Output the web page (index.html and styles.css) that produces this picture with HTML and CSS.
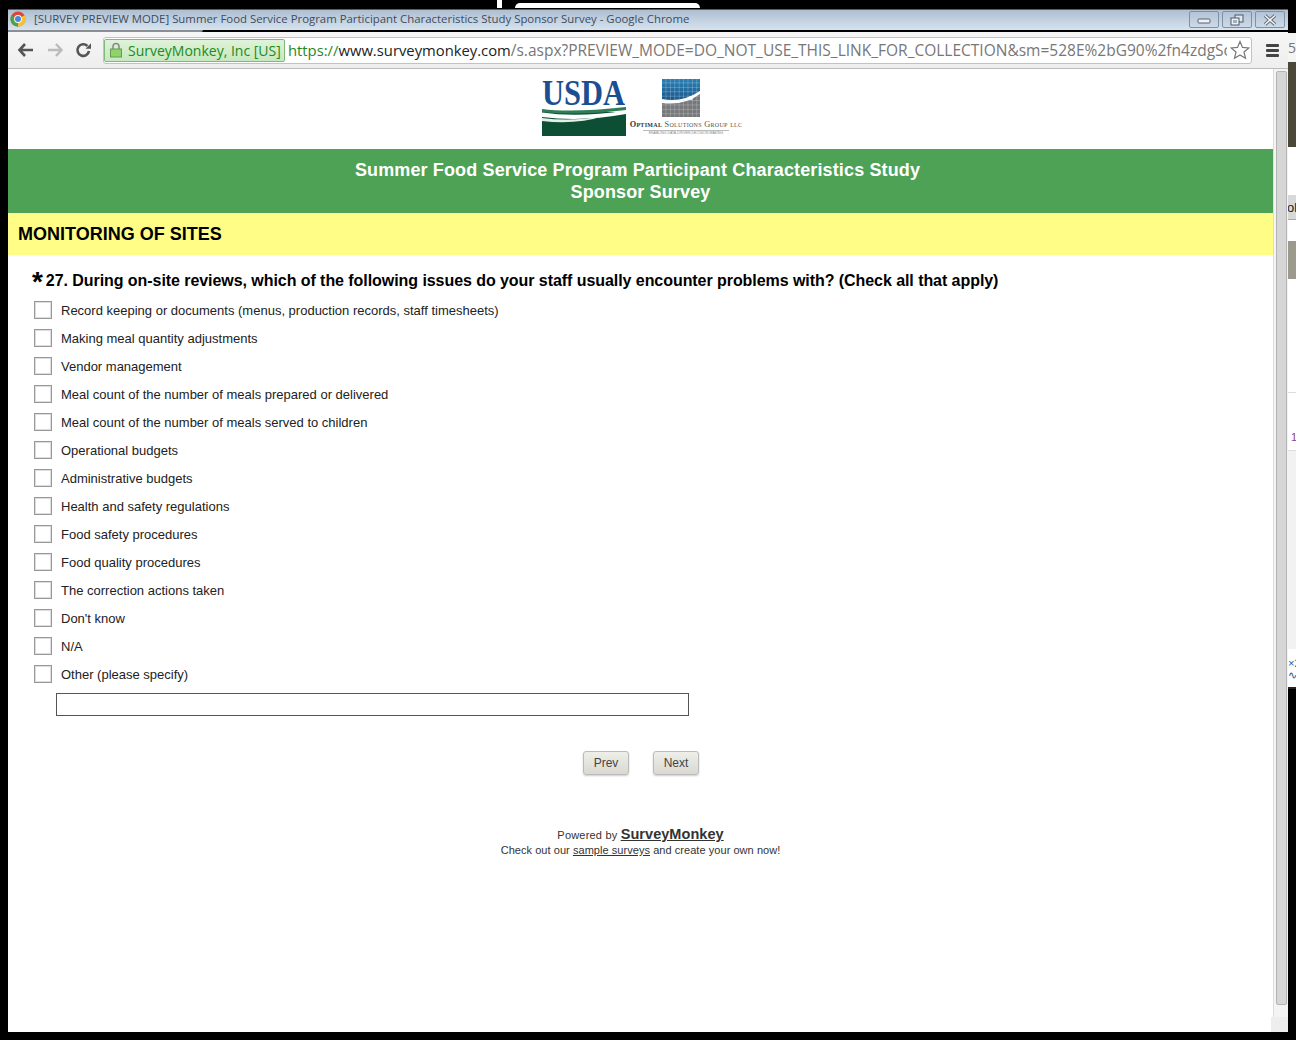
FILE: index.html
```html
<!DOCTYPE html>
<html lang="en">
<head>
<meta charset="utf-8">
<title>Survey preview</title>
<link rel="stylesheet" href="styles.css">
</head>
<body>
<div class="desk">
  <div class="topstrip"><span class="frag-a"></span><span class="frag-b"></span></div>
  <div class="middle">
    <div class="window">
      <header class="titlebar">
        <svg class="chrome-logo" width="16" height="16" viewBox="0 0 16 16">
          <circle cx="8" cy="8" r="7.5" fill="#d9473b"/>
          <path d="M8 8 L14.5 4.2 A7.5 7.5 0 0 1 8 15.5 Z" fill="#f4c430"/>
          <path d="M8 8 L8 15.5 A7.5 7.5 0 0 1 1.5 4.2 Z" fill="#4aa346"/>
          <circle cx="8" cy="8" r="3.9" fill="#fff"/>
          <circle cx="8" cy="8" r="3" fill="#4a86d8"/>
        </svg>
        <span class="wintitle">[SURVEY PREVIEW MODE] Summer Food Service Program Participant Characteristics Study Sponsor Survey - Google Chrome</span>
        <div class="winbtns">
          <span class="winbtn"><svg width="14" height="10" viewBox="0 0 14 10"><rect x="1" y="4" width="12" height="4" rx="1" fill="#eef2f6" stroke="#54606e"/></svg></span>
          <span class="winbtn"><svg width="14" height="12" viewBox="0 0 14 12"><rect x="5" y="1" width="8" height="7" fill="#dfe6ee" stroke="#4c5866"/><rect x="1" y="4" width="8" height="7" fill="#eef2f6" stroke="#4c5866"/><rect x="3" y="6" width="4" height="3" fill="#9fb0c2"/></svg></span>
          <span class="winbtn"><svg width="16" height="12" viewBox="0 0 16 12"><path d="M3 1.5 L13 10.5 M13 1.5 L3 10.5" stroke="#5a6470" stroke-width="3.4"/><path d="M3 1.5 L13 10.5 M13 1.5 L3 10.5" stroke="#f2f4f6" stroke-width="1.6"/></svg></span>
        </div>
      </header>
      <div class="tabline"><span class="tabedge"></span></div>
      <nav class="toolbar">
        <svg class="navicon" width="18" height="16" viewBox="0 0 18 16"><path d="M8 2 L2.5 8 L8 14 M3 8 H16" fill="none" stroke="#555" stroke-width="2.6"/></svg>
        <svg class="navicon" width="18" height="16" viewBox="0 0 18 16"><path d="M10 2 L15.5 8 L10 14 M15 8 H2" fill="none" stroke="#bbb" stroke-width="2.4"/></svg>
        <svg class="navicon" width="18" height="16" viewBox="0 0 18 16"><path d="M14 9 A5.8 5.8 0 1 1 12.4 4" fill="none" stroke="#555" stroke-width="2.6"/><path d="M10.5 6.8 H16 V1.2 Z" fill="#555"/></svg>
        <div class="omnibox">
          <div class="ev">
            <svg width="14" height="16" viewBox="0 0 14 16"><path d="M4 7 V4.5 A3 3 0 0 1 10 4.5 V7" fill="none" stroke="#8a8a8a" stroke-width="1.6"/><rect x="1.5" y="7" width="11" height="8" fill="#8fd468" stroke="#6a9a50"/></svg>
            <span>SurveyMonkey, Inc [US]</span>
          </div>
          <div class="url"><span class="scheme">https://</span><span class="host">www.surveymonkey.com</span><span class="path">/s.aspx?PREVIEW_MODE=DO_NOT_USE_THIS_LINK_FOR_COLLECTION&amp;sm=528E%2bG90%2fn4zdgSc</span></div>
          <svg class="star" width="20" height="20" viewBox="0 0 20 20"><path d="M10 1.5 L12.5 7.4 L18.8 7.9 L14 12 L15.5 18.3 L10 15 L4.5 18.3 L6 12 L1.2 7.9 L7.5 7.4 Z" fill="#fff" stroke="#777" stroke-width="1.2"/></svg>
        </div>
        <div class="burger"><span></span><span></span><span></span></div>
      </nav>
      <div class="viewport">
        <main class="page">
          <div class="logos">
            <svg class="usda" width="84" height="57" viewBox="0 0 84 57">
              <text x="0" y="26" class="usda-text" textLength="83" lengthAdjust="spacingAndGlyphs">USDA</text>
              <rect x="0" y="33" width="84" height="24" fill="#0d4f35"/>
              <path d="M0 30 Q30 34 84 28 L84 31 Q36 37 0 33 Z" fill="#2f7d56"/>
              <path d="M0 33.5 Q36 39 84 31.5 L84 35 Q40 43 0 38 Z" fill="#fff"/>
              <path d="M0 39 Q30 43 62 37 Q34 46 0 42 Z" fill="#e4efe8"/>
            </svg>
            <div class="osg">
              <svg class="osg-mark" width="38" height="38" viewBox="0 0 38 38">
                <defs>
                  <pattern id="grid" width="4.4" height="4.4" patternUnits="userSpaceOnUse"><path d="M4.4 0 V4.4 H0" fill="none" stroke="#dfe8ef" stroke-width=".5"/></pattern>
                </defs>
                <linearGradient id="sky" x1="0" y1="0" x2="0" y2="1"><stop offset="0" stop-color="#2a7fb5"/><stop offset="1" stop-color="#164f80"/></linearGradient>
                <rect width="38" height="26" fill="url(#sky)"/>
                <path d="M0 20 Q20 24 38 12 V38 H0 Z" fill="#fff"/>
                <path d="M0 24 Q22 27 38 15 V38 H0 Z" fill="#77787a"/>
                <rect width="38" height="38" fill="url(#grid)"/>
                <circle cx="29" cy="19" r="2" fill="#fff"/>
              </svg>
              <div class="osg-name"><b>Optimal</b> Solutions Group llc</div>
              <div class="osg-tag">ENABLING DATA-DRIVEN DECISION MAKING</div>
            </div>
          </div>
          <div class="banner">
            <div class="banner-main">Summer Food Service Program Participant Characteristics Study</div>
            <div>Sponsor Survey</div>
          </div>
          <h2 class="section">MONITORING OF SITES</h2>
          <form class="question">
            <h3 class="qtitle"><span class="req">*</span>27. During on-site reviews, which of the following issues do your staff usually encounter problems with? (Check all that apply)</h3>
            <label class="opt"><span class="box"></span>Record keeping or documents (menus, production records, staff timesheets)</label>
            <label class="opt"><span class="box"></span>Making meal quantity adjustments</label>
            <label class="opt"><span class="box"></span>Vendor management</label>
            <label class="opt"><span class="box"></span>Meal count of the number of meals prepared or delivered</label>
            <label class="opt"><span class="box"></span>Meal count of the number of meals served to children</label>
            <label class="opt"><span class="box"></span>Operational budgets</label>
            <label class="opt"><span class="box"></span>Administrative budgets</label>
            <label class="opt"><span class="box"></span>Health and safety regulations</label>
            <label class="opt"><span class="box"></span>Food safety procedures</label>
            <label class="opt"><span class="box"></span>Food quality procedures</label>
            <label class="opt"><span class="box"></span>The correction actions taken</label>
            <label class="opt"><span class="box"></span>Don't know</label>
            <label class="opt"><span class="box"></span>N/A</label>
            <label class="opt"><span class="box"></span>Other (please specify)</label>
            <div class="other"></div>
          </form>
          <div class="buttons">
            <span class="btn">Prev</span>
            <span class="btn">Next</span>
          </div>
          <footer class="foot">
            <div class="foot-1">Powered by <a class="brand">SurveyMonkey</a></div>
            <div class="foot-2">Check out our <a class="plain">sample surveys</a> and create your own now!</div>
          </footer>
        </main>
        <aside class="scroll"><div class="thumb"></div><div class="corner"></div></aside>
      </div>
    </div>
    <div class="behind">
      <div class="b-gap"></div>
      <div class="b-five">5</div>
      <div class="b-olive"></div>
      <div class="b-white1"></div>
      <div class="b-grey">oll</div>
      <div class="b-white2"></div>
      <div class="b-stone"></div>
      <div class="b-white3"></div>
      <div class="b-rows"><span>1</span></div>
      <div class="b-pale"></div>
      <div class="b-glyphs">×2<br>∿</div>
      <div class="b-dark"></div>
    </div>
  </div>
</div>
</body>
</html>
```
FILE: styles.css
```css
* { box-sizing: border-box; }
html, body { margin: 0; height: 100%; background: #000; overflow: hidden; }
.desk { width: 1296px; height: 1040px; background: #000; display: flex; flex-direction: column; }
.topstrip { height: 9px; display: flex; flex: none; }
.frag-a { width: 5px; height: 8px; margin-left: 497px; background: #fff; }
.frag-b { width: 185px; height: 5px; margin: 3px 0 0 13px; background: #fff; border-radius: 5px 5px 0 0; }
.middle { display: flex; height: 1023px; flex: none; }
.window { width: 1280px; margin-left: 8px; display: flex; flex-direction: column; }
.titlebar { height: 21px; flex: none; background: linear-gradient(#aebfd2, #d6e3f0); border-top: 1px solid #55606c; display: flex; align-items: center; padding: 0 0 3px 2px; }
.chrome-logo { flex: none; }
.wintitle { font: 11.4px "Open Sans", "Noto Sans", sans-serif; color: #3e4c5c; margin: 0 0 1px 8px; white-space: nowrap; }
.winbtns { margin-left: auto; display: flex; gap: 3px; padding-right: 3px; align-self: flex-start; padding-top: 1px; }
.winbtn { width: 30px; height: 17px; display: flex; align-items: center; justify-content: center; border: 1px solid #7e90a6; border-radius: 2px; background: linear-gradient(#b4c4d6, #cdd9e6); }
.tabline { height: 2px; background: #000; flex: none; }
.tabedge { display: block; width: 195px; height: 2px; background: #8b8f94; border-radius: 0 0 3px 0; }
.toolbar { height: 37px; flex: none; display: flex; align-items: center; padding: 0 0 0 9px; background: linear-gradient(#f6f6f6, #eeeeee); border-bottom: 1px solid #bcbcbc; }
.navicon { flex: none; margin-right: 11px; }
.omnibox { margin-left: -1px; width: 1149px; height: 27px; flex: none; background: #fff; border: 1px solid #c2c2c2; border-radius: 3px; display: flex; align-items: center; padding-right: 1px; overflow: hidden; }
.ev { height: 23px; width: 181px; flex: none; display: flex; align-items: center; gap: 5px; padding-left: 4px; background: linear-gradient(#dff3d8, #c6e8c0); border: 1px solid #82b87a; border-radius: 2px; font: 14px "Open Sans", "Noto Sans", sans-serif; color: #1d8a1d; white-space: nowrap; }
.url { margin-left: 3px; flex: 1; min-width: 0; overflow: hidden; white-space: nowrap; font: 14.8px "Open Sans", "Noto Sans", sans-serif; }
.scheme { color: #1d8a1d; }
.host { color: #222; }
.path { color: #777; font-size: 15.5px; }
.star { flex: none; margin-left: 3px; }
.burger { width: 13px; margin-left: 14px; display: flex; flex-direction: column; gap: 2px; flex: none; }
.burger span { height: 3px; background: #444; border-radius: 1px; }
.viewport { flex: 1; display: flex; min-height: 0; background: #fff; }
.page { width: 1265px; flex: none; background: #fff; font-family: "Liberation Sans", Arial, sans-serif; }
.logos { height: 80px; display: flex; align-items: flex-start; padding: 10px 0 0 534px; }
.usda { flex: none; }
.usda-text { font: bold 35px "Liberation Serif", serif; fill: #1b4f91; }
.osg { margin-left: 4px; width: 112px; display: flex; flex-direction: column; align-items: center; }
.osg-mark { flex: none; margin-left: -10px; }
.osg-name { font: 8.3px "Liberation Serif", serif; font-variant: small-caps; color: #555; margin-top: 3px; white-space: nowrap; letter-spacing: .3px; }
.osg-name b { color: #333; }
.osg-tag { font: 3.5px "Liberation Sans", sans-serif; color: #888; border-top: 1px solid #bbb; white-space: nowrap; padding: 0 6px; margin-top: 1px; }
.banner { height: 64px; background: #4ea256; color: #fff; font-weight: bold; font-size: 18px; letter-spacing: .13px; line-height: 22px; text-align: center; padding-top: 10px; }
.banner-main { padding-right: 6px; }
.section { margin: 0; height: 42px; background: #fffd86; padding: 0 0 0 10px; font-size: 18px; line-height: 43px; font-weight: bold; color: #000; }
.question { padding: 15px 0 0 24px; display: flex; flex-direction: column; }
.qtitle { margin: 0; font-size: 16px; letter-spacing: -.06px; line-height: 22px; font-weight: bold; color: #000; white-space: nowrap; height: 26px; }
.req { font-size: 28px; line-height: 22px; margin-right: 3px; vertical-align: -5px; }
.opt { display: flex; align-items: center; height: 28px; font-size: 13px; color: #222; }
.box { width: 18px; height: 18px; margin: 0 9px 0 2px; flex: none; background: #fff; border: 1px solid #999; box-shadow: inset 0 0 0 1px #ddd; }
.other { width: 633px; height: 23px; margin: 5px 0 0 24px; border: 1px solid #555; background: #fff; }
.buttons { display: flex; justify-content: flex-start; gap: 24px; padding: 35px 0 0 575px; }
.btn { width: 46px; height: 24px; border: 1px solid #bbb; border-radius: 3px; background: linear-gradient(#efefe9, #d9d9d2); box-shadow: 0 1px 2px rgba(0,0,0,.2); font-size: 12px; line-height: 22px; text-align: center; color: #444; }
.foot { margin-top: 52px; text-align: center; color: #333; font-size: 11px; line-height: 14px; letter-spacing: .05px; }
.foot-1 { height: 16px; letter-spacing: .2px; }
.brand { font-size: 14.5px; letter-spacing: .05px; font-weight: bold; text-decoration: underline; color: #333; }
.plain { text-decoration: underline; color: #333; }
.scroll { width: 15px; flex: none; background: #f4f4f4; border-left: 1px solid #ddd; position: relative; padding: 2px 2px 0 2px; }
.thumb { width: 11px; height: 934px; background: #d6d6d6; border: 1px solid #b4b4b4; border-radius: 2px; }
.corner { position: absolute; right: 0; bottom: 0; width: 17px; height: 15px; background: #eee; }
.behind { width: 8px; flex: none; overflow: hidden; font-family: "Liberation Sans", sans-serif; display: flex; flex-direction: column; }
.b-gap { height: 24px; flex: none; }
.b-five { height: 29px; flex: none; background: #f4f4f4; color: #777; font: 14px/29px "Open Sans", sans-serif; }
.b-olive { height: 85px; flex: none; background: #4b4838; }
.b-white1 { height: 48px; flex: none; background: #fff; }
.b-grey { height: 25px; flex: none; background: #d8d8d8; border-bottom: 1px solid #aaa; font: 13px/25px "Liberation Sans", sans-serif; color: #222; white-space: nowrap; text-indent: -1px; }
.b-white2 { height: 21px; flex: none; background: #fff; }
.b-stone { height: 38px; flex: none; background: #9c9a8c; }
.b-white3 { height: 114px; flex: none; background: #fff; border-bottom: 1px solid #ddd; }
.b-rows { height: 58px; flex: none; background: #fff; border-bottom: 1px solid #ddd; color: #85457f; font-size: 11px; padding-top: 38px; line-height: 12px; text-indent: 3px; }
.b-pale { height: 198px; flex: none; background: #f2f2f2; }
.b-glyphs { height: 38px; flex: none; background: #fff; color: #1d5a8c; font-size: 11px; line-height: 12px; overflow: hidden; padding-top: 8px; }
.b-dark { height: 2px; flex: none; background: #222; }
```
